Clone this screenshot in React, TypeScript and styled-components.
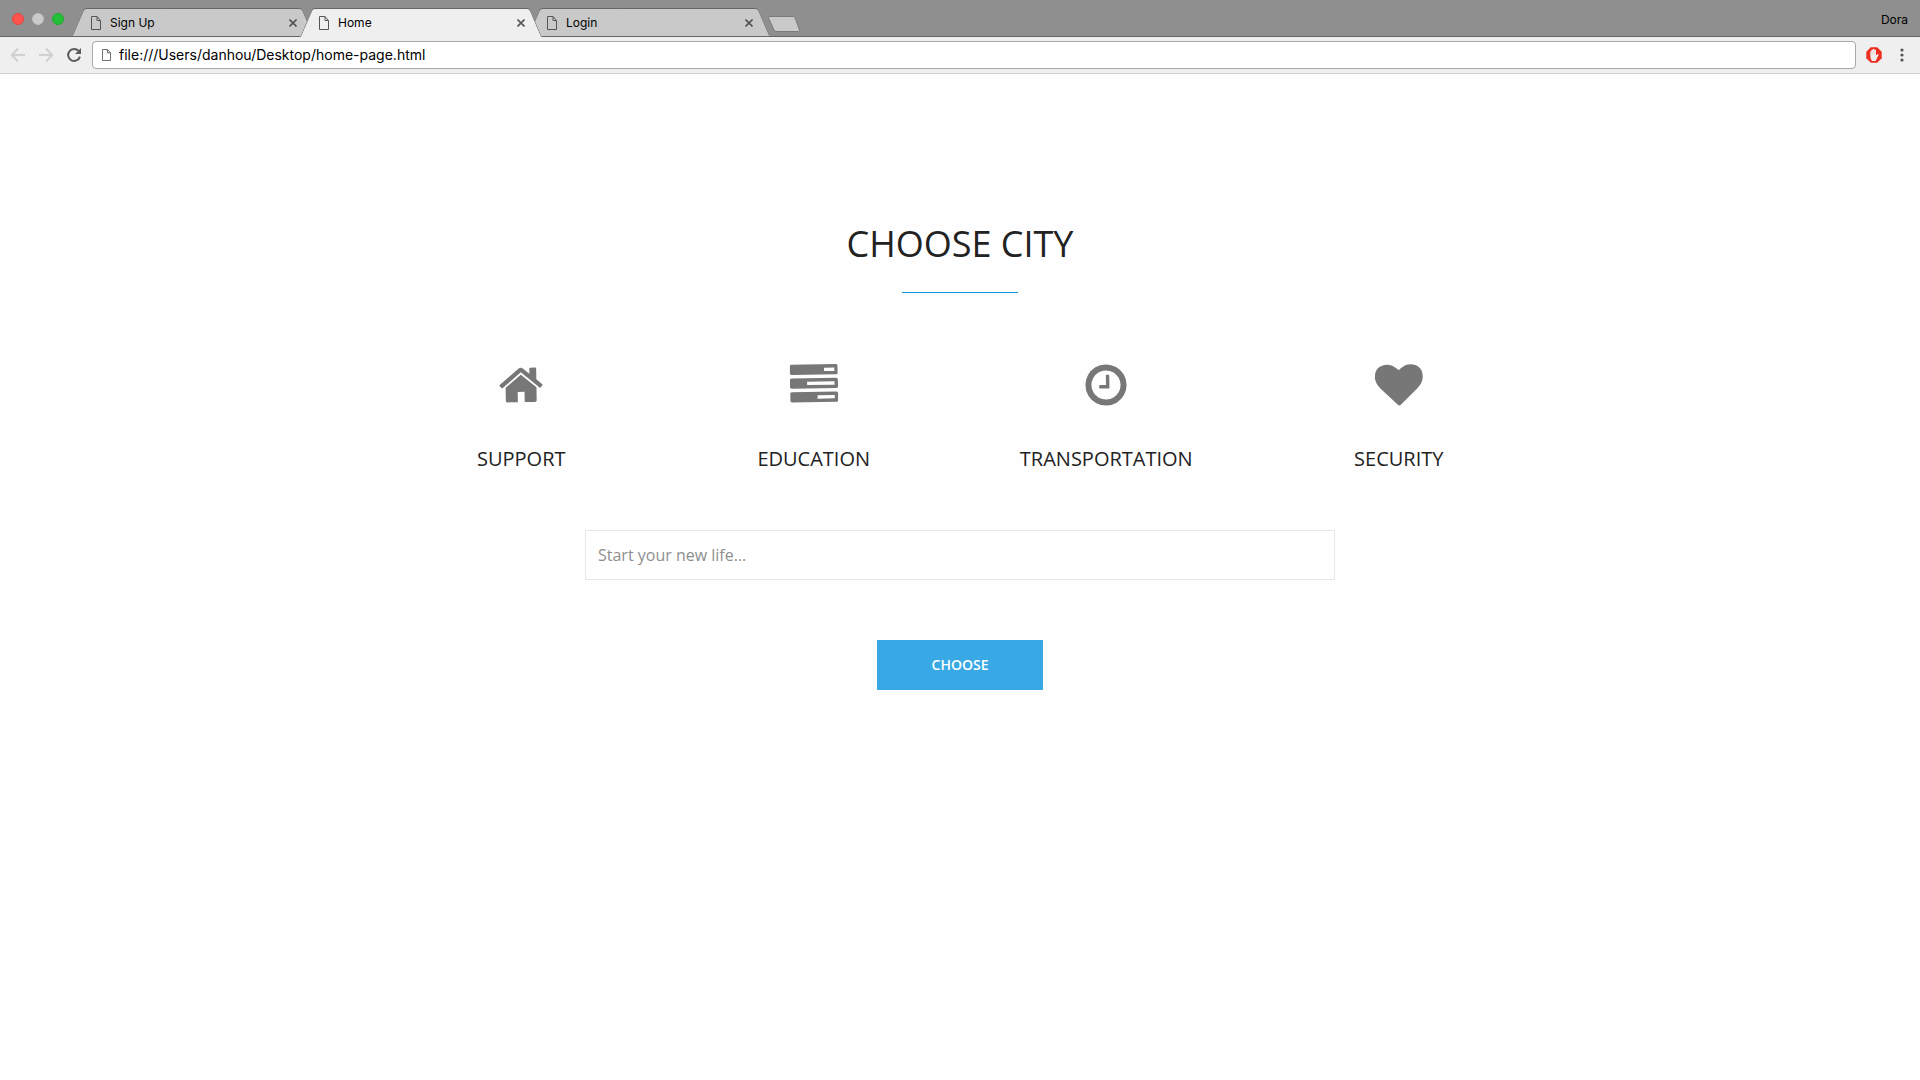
import React from "react";
import styled, { createGlobalStyle } from "styled-components";

const chromeFont = `Inter, Roboto, "Liberation Sans", sans-serif`;
const pageFont = `"Open Sans", "Noto Sans", sans-serif`;

const GlobalStyle = createGlobalStyle`
  *, *::before, *::after { box-sizing: border-box; }
  body { margin: 0; background: #fefefe; }
  button, input { font: inherit; color: inherit; }
  button { padding: 0; border: 0; background: none; cursor: pointer; }
  svg { display: block; }
`;

const TabStrip = styled.header`
  display: flex;
  align-items: flex-end;
  height: 37px;
  padding: 0 12px;
  background: #8f8f8f;
  border-bottom: 1px solid #666;
  font: 12px/16px ${chromeFont};
  color: #000;
`;

const WindowControls = styled.div`
  display: flex;
  gap: 8px;
  align-self: center;
  margin: 2px 8px 0 0;
`;

const WindowButton = styled.button<{ $fill: string; $edge: string }>`
  width: 12px;
  height: 12px;
  border: 1px solid ${(p) => p.$edge};
  border-radius: 50%;
  background: ${(p) => p.$fill};
`;

const Tabs = styled.nav`
  display: flex;
  align-items: flex-end;
  margin-bottom: -1px;
`;

const Tab = styled.div<{ $active?: boolean }>`
  position: relative;
  isolation: isolate;
  z-index: ${(p) => (p.$active ? 1 : 0)};
  display: flex;
  align-items: center;
  width: 242px;
  height: 29px;
  margin-right: -14px;
  padding: 0 17px 0 19px;

  &::before,
  &::after {
    content: "";
    position: absolute;
    z-index: -1;
    top: 0;
    bottom: ${(p) => (p.$active ? 0 : "1px")};
    width: 56%;
    background: ${(p) => (p.$active ? "#efefef" : "#c9c9c9")};
    border-top: 1px solid #666;
  }
  &::before {
    left: 0;
    border-left: 1px solid #777;
    border-top-left-radius: 3px;
    transform: skewX(-23deg);
    transform-origin: bottom left;
  }
  &::after {
    right: 0;
    border-right: 1px solid #777;
    border-top-right-radius: 3px;
    transform: skewX(23deg);
    transform-origin: bottom right;
  }
`;

const TabTitle = styled.button`
  display: flex;
  flex: 1;
  align-items: center;
  gap: 9px;
  text-align: left;
`;

const CloseButton = styled.button`
  color: #555;
`;

const NewTab = styled.button`
  align-self: center;
  margin: 12px 0 0 11px;
`;

const UserName = styled.button`
  align-self: center;
  margin: 4px 0 0 auto;
`;

const Toolbar = styled.div`
  display: flex;
  align-items: center;
  height: 37px;
  padding: 0 16px 0 10px;
  background: #efefef;
  border-bottom: 1px solid #d0d0d0;
`;

const NavButtons = styled.div`
  display: flex;
  gap: 12px;
  margin-right: 10px;
`;

const NavButton = styled.button<{ $muted?: boolean }>`
  color: ${(p) => (p.$muted ? "#d0d0d0" : "#5c5c5c")};
`;

const AddressBar = styled.label`
  display: flex;
  flex: 1;
  align-items: center;
  gap: 8px;
  height: 28px;
  padding: 0 9px;
  border: 1px solid #a9a9a9;
  border-radius: 4px;
  background: #fff;
`;

const AddressInput = styled.input`
  flex: 1;
  min-width: 0;
  padding: 0;
  border: 0;
  outline: 0;
  background: none;
  font: 14px/20px ${chromeFont};
  color: #000;
`;

const Extensions = styled.div`
  display: flex;
  align-items: center;
  gap: 18px;
  margin-left: 10px;
`;

const Page = styled.main`
  display: flex;
  flex-direction: column;
  align-items: center;
  padding: 150px 16px 64px;
  font-family: ${pageFont};
  color: #222;
`;

const Title = styled.h1`
  margin: 0;
  font-size: 36px;
  line-height: 40px;
  font-weight: 400;
  text-transform: uppercase;
`;

const Rule = styled.hr`
  width: 116px;
  height: 1px;
  margin: 28px 0 68px;
  border: 0;
  background: #0f96e8;
`;

const Features = styled.section`
  display: grid;
  grid-template-columns: repeat(4, 1fr);
  width: 100%;
  max-width: 1170px;
`;

const Feature = styled.div`
  display: flex;
  flex-direction: column;
  align-items: center;
  gap: 38px;
`;

const FeatureIcon = styled.svg`
  width: 48px;
  height: 48px;
  fill: #777;
  transform: rotate(-1deg);
`;

const FeatureName = styled.h2`
  margin: 0;
  font-size: 20px;
  line-height: 24px;
  font-weight: 400;
  text-transform: uppercase;
`;

const CityForm = styled.form`
  display: flex;
  flex-direction: column;
  align-items: center;
  gap: 60px;
  width: 100%;
  max-width: 750px;
  margin-top: 59px;
`;

const CityInput = styled.input`
  width: 100%;
  height: 50px;
  padding: 0 12px;
  border: 1px solid #e7e7e7;
  border-radius: 0;
  background: #fff;
  font-size: 16px;

  &::placeholder {
    color: #8e8e8e;
    opacity: 1;
  }
`;

const ChooseButton = styled.button`
  width: 166px;
  height: 50px;
  padding-bottom: 2px;
  background: #39a9e6;
  color: #fff;
  font-size: 14px;
  font-weight: 600;
  text-transform: uppercase;
`;

const PageIcon = ({ width = 10, height = 14 }) => (
  <svg width={width} height={height} viewBox="0 0 10 14" preserveAspectRatio="none" fill="none" stroke="#555">
    <path d="M.5 .5H6L9.5 4.5V13.5H.5ZM6 .5V4.5H9.5" />
  </svg>
);

const CloseIcon = () => (
  <svg width="8" height="8" viewBox="0 0 8 8" fill="none" stroke="currentColor" strokeWidth="1.6">
    <path d="M.5 .5L7.5 7.5M7.5 .5L.5 7.5" />
  </svg>
);

const ArrowIcon = ({ forward = false }) => (
  <svg width="16" height="16" viewBox="0 0 16 16" fill="none" stroke="currentColor" strokeWidth="2">
    <path d={forward ? "M1 8H14M8 1.5L14.3 8L8 14.5" : "M15 8H2M8 1.5L1.7 8L8 14.5"} />
  </svg>
);

const ReloadIcon = () => (
  <svg width="16" height="16" viewBox="0 0 16 16">
    <path d="M12.6 3.9A6 6 0 1 0 13.9 9.6" fill="none" stroke="currentColor" strokeWidth="2" />
    <path d="M15 1V7H9Z" fill="currentColor" />
  </svg>
);

const BlockerIcon = () => (
  <svg width="16" height="16" viewBox="0 0 16 16">
    <path d="M4.8 .3H11.2L15.7 4.8V11.2L11.2 15.7H4.8L.3 11.2V4.8Z" fill="#ec2d1f" />
    <path
      d="M4.3 8V4.4Q4.8 3.6 5.4 4.4V3Q6.1 2 6.8 3V2.3Q7.6 1.3 8.4 2.3V3Q9.2 2 10 3V8.5L11.4 7.2Q12.6 6.8 12.6 7.8L10.6 12L9.6 14H6L4.6 11.6Z"
      fill="#f3eeee"
    />
    <path d="M5.5 4.4V7.6M6.9 3V7.4M8.4 3V7.4" stroke="#d8b8b5" strokeWidth=".4" />
  </svg>
);

const MenuIcon = () => (
  <svg width="4" height="14" viewBox="0 0 4 14" fill="#555">
    <circle cx="2" cy="2" r="1.6" />
    <circle cx="2" cy="7" r="1.6" />
    <circle cx="2" cy="12" r="1.6" />
  </svg>
);

const tabs = [
  { title: "Sign Up", active: false },
  { title: "Home", active: true },
  { title: "Login", active: false },
];

const features = [
  {
    name: "Support",
    viewBox: "-64 0 1792 1792",
    path: "M1408 992v480q0 26-19 45t-45 19h-384v-384h-256v384h-384q-26 0-45-19t-19-45v-480q0-1 .5-3t.5-3l575-474 575 474q1 2 1 6zm223-69l-62 74q-8 9-21 11h-3q-13 0-21-7l-692-577-692 577q-12 8-24 7-13-2-21-11l-62-74q-8-10-7-23.5t11-21.5l719-599q32-26 76-26t76 26l244 204v-195q0-14 9-23t23-9h192q14 0 23 9t9 23v408l219 182q10 8 11 21.5t-7 23.5z",
  },
  {
    name: "Education",
    viewBox: "0 0 1792 1792",
    path: "M1024 1408h640v-128h-640v128zm-384-512h1024v-128h-1024v128zm640-512h384v-128h-384v128zm512 832v256q0 26-19 45t-45 19h-1664q-26 0-45-19t-19-45v-256q0-26 19-45t45-19h1664q26 0 45 19t19 45zm0-512v256q0 26-19 45t-45 19h-1664q-26 0-45-19t-19-45v-256q0-26 19-45t45-19h1664q26 0 45 19t19 45zm0-512v256q0 26-19 45t-45 19h-1664q-26 0-45-19t-19-45v-256q0-26 19-45t45-19h1664q26 0 45 19t19 45z",
  },
  {
    name: "Transportation",
    viewBox: "0 0 1792 1792",
    path: "M1024 544v448q0 14-9 23t-23 9h-320q-14 0-23-9t-9-23v-64q0-14 9-23t23-9h224v-352q0-14 9-23t23-9h64q14 0 23 9t9 23zm416 352q0-148-73-273t-198-198-273-73-273 73-198 198-73 273 73 273 198 198 273 73 273-73 198-198 73-273zm224 0q0 209-103 385.5t-279.5 279.5-385.5 103-385.5-103-279.5-279.5-103-385.5 103-385.5 279.5-279.5 385.5-103 385.5 103 279.5 279.5 103 385.5z",
  },
  {
    name: "Security",
    viewBox: "0 0 1792 1792",
    path: "M896 1664q-26 0-44-18l-624-602q-10-8-27.5-26t-55.5-65.5-68-97.5-53.5-121-23.5-138q0-220 127-344t351-124q62 0 126.5 21.5t120 58 95.5 68.5 76 68q36-36 76-68t95.5-68.5 120-58 126.5-21.5q224 0 351 124t127 344q0 221-229 450l-623 600q-18 18-44 18z",
  },
];

export default function App() {
  return (
    <>
      <GlobalStyle />
      <TabStrip>
        <WindowControls>
          <WindowButton $fill="#ff544d" $edge="#e5453e" aria-label="Close window" />
          <WindowButton $fill="#cbcbcb" $edge="#bdbdbd" aria-label="Minimize window" />
          <WindowButton $fill="#24c138" $edge="#1bab2b" aria-label="Zoom window" />
        </WindowControls>
        <Tabs>
          {tabs.map((tab) => (
            <Tab key={tab.title} $active={tab.active}>
              <TabTitle>
                <PageIcon />
                {tab.title}
              </TabTitle>
              <CloseButton aria-label={`Close ${tab.title}`}>
                <CloseIcon />
              </CloseButton>
            </Tab>
          ))}
        </Tabs>
        <NewTab aria-label="New tab">
          <svg width="34" height="17" viewBox="0 0 34 17">
            <path
              d="M3 .5H26Q27.5 .5 28 1.8L32.5 14Q33 15.5 31.5 15.5H9Q7.5 15.5 7 14L1.5 2Q1 .5 3 .5Z"
              fill="#c9c9c9"
              stroke="#7b7b7b"
            />
          </svg>
        </NewTab>
        <UserName>Dora</UserName>
      </TabStrip>
      <Toolbar>
        <NavButtons>
          <NavButton $muted aria-label="Back">
            <ArrowIcon />
          </NavButton>
          <NavButton $muted aria-label="Forward">
            <ArrowIcon forward />
          </NavButton>
          <NavButton aria-label="Reload">
            <ReloadIcon />
          </NavButton>
        </NavButtons>
        <AddressBar>
          <PageIcon width={9} height={12} />
          <AddressInput aria-label="Address" defaultValue="file:///Users/danhou/Desktop/home-page.html" />
        </AddressBar>
        <Extensions>
          <button aria-label="Ad blocker">
            <BlockerIcon />
          </button>
          <button aria-label="Menu">
            <MenuIcon />
          </button>
        </Extensions>
      </Toolbar>
      <Page>
        <Title>Choose City</Title>
        <Rule />
        <Features>
          {features.map((feature) => (
            <Feature key={feature.name}>
              <FeatureIcon viewBox={feature.viewBox} aria-hidden="true">
                <path d={feature.path} />
              </FeatureIcon>
              <FeatureName>{feature.name}</FeatureName>
            </Feature>
          ))}
        </Features>
        <CityForm onSubmit={(event) => event.preventDefault()}>
          <CityInput type="text" aria-label="City" placeholder="Start your new life..." />
          <ChooseButton type="submit">Choose</ChooseButton>
        </CityForm>
      </Page>
    </>
  );
}
